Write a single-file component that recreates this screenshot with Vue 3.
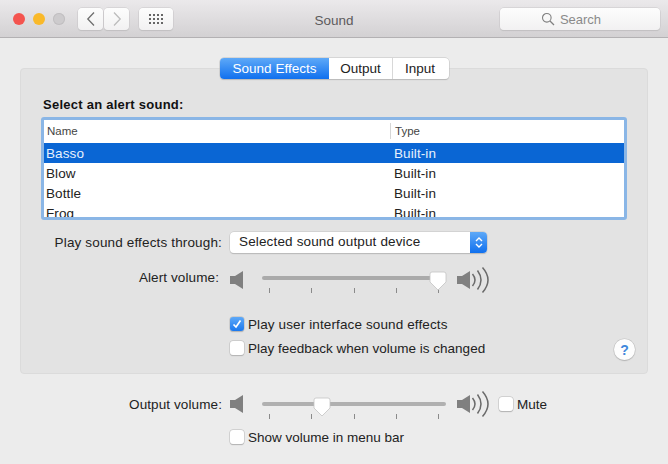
<script setup>
const sounds = [
  { name: 'Basso', type: 'Built-in', selected: true },
  { name: 'Blow', type: 'Built-in' },
  { name: 'Bottle', type: 'Built-in' },
  { name: 'Frog', type: 'Built-in' },
]
const ticks = [0, 1, 2, 3, 4]
const dots = Array.from({ length: 12 })
</script>

<template>
  <div class="window">
    <header class="titlebar">
      <div class="lights">
        <span class="light red"></span>
        <span class="light yellow"></span>
        <span class="light gray"></span>
      </div>
      <div class="nav">
        <button class="tool nav-btn">
          <svg width="10" height="16" viewBox="0 0 10 16"><path d="M8 1.500 1.800 8 8 14.500" fill="none" stroke="#6e6e6e" stroke-width="1.300"/></svg>
        </button>
        <button class="tool nav-btn">
          <svg width="10" height="16" viewBox="0 0 10 16"><path d="M2 1.500 8.200 8 2 14.500" fill="none" stroke="#bcbcbc" stroke-width="1.300"/></svg>
        </button>
      </div>
      <button class="tool grid-btn">
        <span class="dots"><i v-for="(d, i) in dots" :key="i"></i></span>
      </button>
      <div class="title">Sound</div>
      <div class="tool search">
        <svg width="14" height="14" viewBox="0 0 14 14"><circle cx="5.800" cy="5.800" r="4.300" fill="none" stroke="#808080" stroke-width="1.100"/><path d="M9 9l4 4" stroke="#808080" stroke-width="1.200"/></svg>
        <span>Search</span>
      </div>
    </header>

    <main class="content">
      <nav class="tabs">
        <span class="tab active t1">Sound Effects</span>
        <span class="tab t2">Output</span>
        <span class="tab t3">Input</span>
      </nav>

      <section class="group">
        <div class="heading">Select an alert sound:</div>
        <div class="list">
          <div class="list-head">
            <span class="col-name">Name</span>
            <span class="col-type">Type</span>
          </div>
          <div v-for="s in sounds" :key="s.name" class="row" :class="{ selected: s.selected }">
            <span class="col-name">{{ s.name }}</span>
            <span class="col-type">{{ s.type }}</span>
          </div>
        </div>

        <div class="through">
          <label class="through-label">Play sound effects through:</label>
          <div class="select">
            <span class="select-text">Selected sound output device</span>
            <span class="select-arrows">
              <svg width="8" height="13" viewBox="0 0 8 13"><path d="M1 5l3-3 3 3M1 8l3 3 3-3" fill="none" stroke="#fff" stroke-width="1.400"/></svg>
            </span>
          </div>
        </div>

        <div class="volume alert">
          <label class="vol-label">Alert volume:</label>
          <svg class="spk-small" width="14" height="18" viewBox="0 0 14 18"><path d="M0 5h5l8-5v18l-8-5H0z" fill="#808080"/></svg>
          <div class="slider">
            <div class="track"></div>
            <svg class="thumb thumb-alert" width="18" height="20" viewBox="0 0 18 20"><path d="M3 1h12a2 2 0 0 1 2 2v8l-8 8-8-8V3a2 2 0 0 1 2-2z" fill="#fff" stroke="#c4c4c4" stroke-width=".8"/></svg>
            <div class="ticks"><i v-for="t in ticks" :key="t"></i></div>
          </div>
          <svg class="spk-large" width="32" height="26" viewBox="0 0 32 26"><path d="M0 9h5l8-5v18l-8-5H0z" fill="#808080"/><g fill="none" stroke="#6a6a6a" stroke-width="1.500"><path d="M15.500 7q5 6 0 12"/><path d="M20.500 3.500q7 9.500 0 19"/><path d="M25.500 .5q11 12.500 0 25"/></g></svg>
        </div>

        <div class="checks">
          <label class="check-line wide">
            <span class="box checked">
              <svg width="10" height="10" viewBox="0 0 10 10"><path d="M1.500 5.500 4 8l4.500-6.500" fill="none" stroke="#fff" stroke-width="1.700"/></svg>
            </span>
            Play user interface sound effects
          </label>
          <label class="check-line">
            <span class="box"></span>
            Play feedback when volume is changed
          </label>
        </div>
        <button class="help">?</button>
      </section>

      <div class="volume output">
        <label class="vol-label out-label">Output volume:</label>
        <svg class="spk-small" width="14" height="18" viewBox="0 0 14 18"><path d="M0 5h5l8-5v18l-8-5H0z" fill="#808080"/></svg>
        <div class="slider">
          <div class="track"></div>
          <svg class="thumb thumb-output" width="18" height="20" viewBox="0 0 18 20"><path d="M3 1h12a2 2 0 0 1 2 2v8l-8 8-8-8V3a2 2 0 0 1 2-2z" fill="#fff" stroke="#c4c4c4" stroke-width=".8"/></svg>
          <div class="ticks"><i v-for="t in ticks" :key="t"></i></div>
        </div>
        <svg class="spk-large" width="32" height="26" viewBox="0 0 32 26"><path d="M0 9h5l8-5v18l-8-5H0z" fill="#808080"/><g fill="none" stroke="#6a6a6a" stroke-width="1.500"><path d="M15.500 7q5 6 0 12"/><path d="M20.500 3.500q7 9.500 0 19"/><path d="M25.500 .5q11 12.500 0 25"/></g></svg>
        <label class="check-line mute"><span class="box"></span>Mute</label>
      </div>
      <label class="check-line menu-bar"><span class="box"></span>Show volume in menu bar</label>
    </main>
  </div>
</template>

<style scoped>
.window {
  width: 668px;
  height: 464px;
  overflow: hidden;
  background: #ececec;
  font-family: "Liberation Sans", Arial, sans-serif;
  font-size: 13px;
  color: #222;
}
.titlebar {
  height: 37px;
  display: flex;
  align-items: flex-start;
  background: linear-gradient(#ebe9eb, #d3d1d3);
  border-bottom: 1px solid #b3b1b3;
}
.lights {
  display: flex;
  gap: 8px;
  padding: 13px 0 0 13px;
  width: 78px;
  box-sizing: border-box;
}
.light { width: 12px; height: 12px; border-radius: 50%; }
.red { background: #f4544f; }
.yellow { background: #f9b92a; }
.gray { background: #cdcbcd; box-shadow: inset 0 0 0 1px #c1bfc1; }
.tool {
  height: 22px;
  padding: 0;
  border: 0;
  border-radius: 4px;
  background: linear-gradient(#fdfdfd, #f2f1f2);
  box-shadow: 0 0 0 .5px #c8c6c8, 0 1px 1px #bdbbbd;
  display: flex;
  align-items: center;
  justify-content: center;
}
.nav { display: flex; gap: 1px; margin-top: 8px; }
.nav-btn { width: 25px; }
.grid-btn { width: 34px; margin: 8px 0 0 10px; }
.dots { display: grid; grid-template-columns: repeat(4, 2px); gap: 2px; }
.dots i { width: 2px; height: 2px; background: #666; }
.title {
  margin: 13px 0 0 140px;
  width: 42px;
  text-align: center;
  line-height: 16px;
  color: #5c5a5c;
  font-size: 13.500px;
}
.search {
  width: 160px;
  box-sizing: border-box;
  padding-right: 18px;
  margin: 8px 0 0 145px;
  gap: 5px;
  color: #8a8a8a;
  font-size: 13px;
}
.content { display: flex; flex-direction: column; padding: 20px 20px 0; }
.tabs {
  position: relative;
  z-index: 1;
  display: flex;
  align-self: flex-start;
  margin: 0 0 -11px 200px;
  height: 21px;
  border-radius: 4px;
  background: #fff;
  box-shadow: 0 0 0 .5px #c0c0c0, 0 1px 1px #b5b5b5;
  font-size: 13.500px;
}
.tab { display: flex; align-items: center; justify-content: center; color: #222; }
.t1 { width: 109px; }
.t2 { border-right: 1px solid #d8d8d8; width: 63px; }
.t3 { width: 56px; padding-right: 2px; box-sizing: border-box; }
.active {
  color: #fff;
  background: linear-gradient(#5ea9f8, #1070ee);
  border-radius: 4px 0 0 4px;
}
.group {
  position: relative;
  height: 306px;
  box-sizing: border-box;
  background: #e3e3e3;
  border: 1px solid #dbdbdb;
  border-radius: 4px;
  padding: 27px 20px 0;
}
.heading { font-weight: 700; font-size: 13px; line-height: 18px; margin-left: 2px; letter-spacing: .25px; color: #111; }
.list {
  margin-top: 3px;
  height: 103px;
  box-sizing: border-box;
  width: 586px;
  border: 3px solid #8ab6e6;
  border-radius: 3px;
  background: #fff;
  overflow: hidden;
}
.list-head {
  display: flex;
  align-items: center;
  height: 23px;
  box-sizing: border-box;
  padding-bottom: 2px;
  font-size: 11.500px;
  color: #444;
}
.list-head .col-name { width: 346px; padding-left: 3px; box-sizing: border-box; }
.list-head .col-type { padding-left: 4px; border-left: 1px solid #d6d6d6; line-height: 16px; }
.row {
  display: flex;
  align-items: center;
  height: 20px;
  font-size: 13.500px;
  letter-spacing: .1px;
  color: #222;
}
.row .col-name { width: 350px; padding-left: 2px; box-sizing: border-box; }
.row.selected { background: #0a66d4; color: #e8f1fc; }
.through { display: flex; align-items: center; margin-top: 12px; height: 21px; font-size: 13.500px; letter-spacing: .15px; }
.through-label { width: 180px; margin-left: 1px; text-align: right; }
.select {
  margin-left: 8px;
  width: 257px;
  height: 21px;
  display: flex;
  background: #fff;
  border-radius: 4px;
  box-shadow: 0 0 0 .5px #c4c4c4, 0 1px 1px #b0b0b0;
  overflow: hidden;
}
.select-text { flex: 1; padding-left: 9px; line-height: 20px; }
.select-arrows {
  width: 17px;
  display: flex;
  align-items: center;
  justify-content: center;
  background: linear-gradient(#5ea9f8, #1070ee);
}
.volume { display: flex; align-items: flex-start; }
.alert { margin-top: 16px; }
.vol-label { width: 177px; text-align: right; margin: 0 11px 0 1px; line-height: 18px; font-size: 13.500px; letter-spacing: .1px; }
.out-label { width: 202px; margin: 1px 8px 0 0; }
.spk-small { margin-top: 2px; flex: none; }
.output .spk-small { margin-top: 0; }
.slider { position: relative; width: 184px; margin-left: 18px; height: 24px; flex: none; }
.track { height: 4px; margin-top: 7px; border-radius: 2px; background: #aaa; }
.output .track { background: #b0b0b0; }
.thumb { position: absolute; top: 2px; }
.thumb-alert { left: 167px; }
.thumb-output { left: 51px; }
.ticks { display: flex; justify-content: space-between; padding: 0 7px; margin-top: 8px; }
.ticks i { width: 1px; height: 5px; background: #8a8a8a; }
.spk-large { margin: -2px 0 0 11px; flex: none; }
.output .spk-large { margin-top: -4px; }
.checks { display: flex; flex-direction: column; gap: 6px; margin: 22px 0 0 189px; }
.check-line { display: flex; align-items: center; gap: 4px; height: 18px; font-size: 13.500px; }
.wide { letter-spacing: .12px; }
.box {
  width: 14px;
  height: 14px;
  box-sizing: border-box;
  background: #fff;
  border-radius: 3px;
  box-shadow: 0 0 0 .5px #bdbdbd, 0 .5px 1px #aaa;
  display: flex;
  align-items: center;
  justify-content: center;
  flex: none;
}
.box.checked { background: linear-gradient(#5ea9f8, #1a78ee); }
.help {
  position: absolute;
  right: 12px;
  bottom: 13px;
  width: 21px;
  height: 21px;
  padding: 0;
  border: 0;
  border-radius: 50%;
  background: #fdfdfd;
  box-shadow: 0 0 0 .5px #c0c0c0, 0 1px 1px #aaa;
  color: #3f88dc;
  font: 700 14px "Liberation Sans", Arial, sans-serif;
}
.output { margin-top: 21px; }
.mute { margin: 0 0 0 10px; }
.menu-bar { margin: 9px 0 0 210px; }
</style>
